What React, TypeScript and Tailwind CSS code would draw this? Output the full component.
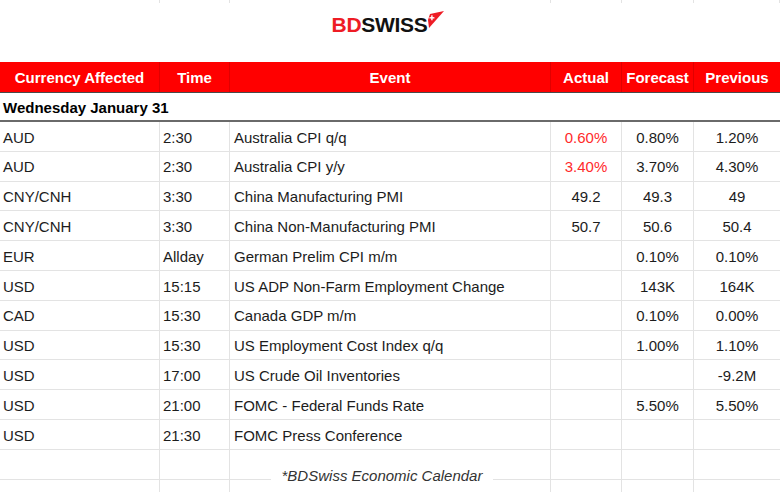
import React from "react";

type Row = {
  cur: string;
  time: string;
  event: string;
  actual?: string;
  forecast?: string;
  previous?: string;
};

const rows: Row[] = [
  { cur: "AUD", time: "2:30", event: "Australia CPI q/q", actual: "0.60%", forecast: "0.80%", previous: "1.20%" },
  { cur: "AUD", time: "2:30", event: "Australia CPI y/y", actual: "3.40%", forecast: "3.70%", previous: "4.30%" },
  { cur: "CNY/CNH", time: "3:30", event: "China Manufacturing PMI", actual: "49.2", forecast: "49.3", previous: "49" },
  { cur: "CNY/CNH", time: "3:30", event: "China Non-Manufacturing PMI", actual: "50.7", forecast: "50.6", previous: "50.4" },
  { cur: "EUR", time: "Allday", event: "German Prelim CPI m/m", forecast: "0.10%", previous: "0.10%" },
  { cur: "USD", time: "15:15", event: "US ADP Non-Farm Employment Change", forecast: "143K", previous: "164K" },
  { cur: "CAD", time: "15:30", event: "Canada GDP m/m", forecast: "0.10%", previous: "0.00%" },
  { cur: "USD", time: "15:30", event: "US Employment Cost Index q/q", forecast: "1.00%", previous: "1.10%" },
  { cur: "USD", time: "17:00", event: "US Crude Oil Inventories", previous: "-9.2M" },
  { cur: "USD", time: "21:00", event: "FOMC - Federal Funds Rate", forecast: "5.50%", previous: "5.50%" },
  { cur: "USD", time: "21:30", event: "FOMC Press Conference" },
];

const redActual = new Set(["0.60%", "3.40%"]);

function Logo() {
  return (
    <div className="flex items-start">
      <span className="text-[21px] font-bold leading-none tracking-[-0.3px] text-[#ee1c25]">BD</span>
      <span className="text-[21px] font-bold leading-none tracking-[-0.3px] text-[#111]">SWISS</span>
      <svg width="18" height="18" viewBox="0 0 18 18" className="-mt-[3px] -ml-[1px]">
        <polygon points="4,3 18,0 3,17 2,9" fill="#ee1c25" />
        <rect x="5.2" y="4.3" width="1.4" height="5" fill="#fff" />
        <rect x="3.4" y="6.1" width="5" height="1.4" fill="#fff" />
      </svg>
    </div>
  );
}

const cols = "grid grid-cols-[160px_70px_321px_71px_72px_86px]";
const cell = "flex items-center pt-[3px] border-r border-b border-[#e3e3e3]";

export default function App() {
  return (
    <div
      className="relative w-[780px] h-[492px] overflow-hidden bg-white text-[15px] text-[#1c1c1c]"
      style={{ fontFamily: '"Liberation Sans", Arial, sans-serif' }}
    >
      {/* top gridline stub */}
      <div className={`${cols} h-[3px]`}>
        {[0, 1, 2, 3, 4, 5].map((i) => (
          <div key={i} className="border-r border-[#e3e3e3]" />
        ))}
      </div>

      {/* logo row */}
      <div className="h-[59px] flex justify-center pt-[11px] pr-[4px]">
        <Logo />
      </div>

      {/* header */}
      <div className={`${cols} h-[31px] bg-[#ff0000] border-b border-[#4a4a4a] font-bold text-white`}>
        {["Currency Affected", "Time", "Event", "Actual", "Forecast", "Previous"].map((h, i) => (
          <div
            key={h}
            className={`flex items-center justify-center pt-[2px] ${i < 5 ? "border-r border-[#e00000]" : ""}`}
          >
            {h}
          </div>
        ))}
      </div>

      {/* date row */}
      <div className="h-[29px] flex items-center pt-[3px] pl-[3px] font-bold text-black border-b-2 border-[#6a6a6a]">
        Wednesday January 31
      </div>

      {/* data rows */}
      {rows.map((r, idx) => (
        <div key={idx} className={`${cols} h-[29.8px]`}>
          <div className={`${cell} pl-[3px]`}>{r.cur}</div>
          <div className={`${cell} pl-[3px]`}>{r.time}</div>
          <div className={`${cell} pl-[4px]`}>{r.event}</div>
          <div
            className={`${cell} justify-center ${
              r.actual && redActual.has(r.actual) ? "text-[#ff2a2a]" : ""
            }`}
          >
            {r.actual}
          </div>
          <div className={`${cell} justify-center`}>{r.forecast}</div>
          <div className="flex items-center justify-center pt-[3px] border-b border-[#e3e3e3]">{r.previous}</div>
        </div>
      ))}

      {/* footer rows */}
      {[0, 1].map((k) => (
        <div key={k} className={`${cols} h-[29.8px]`}>
          <div className="border-r border-b border-[#e3e3e3]" />
          <div className="border-r border-b border-[#e3e3e3]" />
          <div className="border-r border-b border-[#e3e3e3]" />
          <div className="border-r border-b border-[#e3e3e3]" />
          <div className="border-r border-b border-[#e3e3e3]" />
          <div className="border-b border-[#e3e3e3]" />
        </div>
      ))}

      {/* footer caption over gridline */}
      <div className="absolute left-[271px] top-[466px] w-[222px] h-[20px] bg-white flex items-center justify-center italic text-[#333]">
        *BDSwiss Economic Calendar
      </div>
    </div>
  );
}
